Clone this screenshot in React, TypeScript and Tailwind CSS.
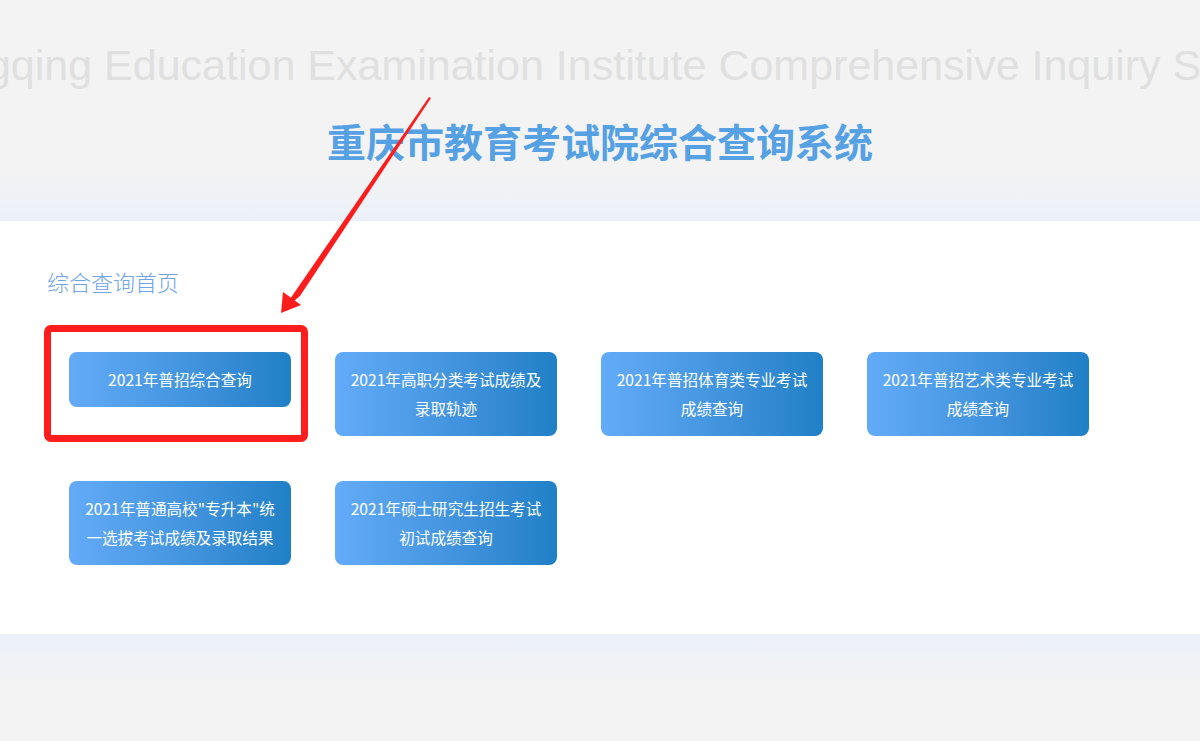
import React from "react";

const queries = [
  "2021年普招综合查询",
  "2021年高职分类考试成绩及录取轨迹",
  "2021年普招体育类专业考试成绩查询",
  "2021年普招艺术类专业考试成绩查询",
  "2021年普通高校\"专升本\"统一选拔考试成绩及录取结果",
  "2021年硕士研究生招生考试初试成绩查询",
];

const cjk = { fontFamily: '"Microsoft YaHei", "Noto Sans CJK SC", sans-serif' };

function Arrow() {
  // hand-drawn red arrow pointing at the first query
  return (
    <svg
      className="pointer-events-none absolute left-0 top-0"
      width="1200"
      height="741"
      viewBox="0 0 1200 741"
    >
      <polygon
        points="429,97 431,98 300,296 294,301 290,299"
        fill="#fd1d1d"
      />
      <polygon points="281,313 283,292 301,305" fill="#fd1d1d" />
    </svg>
  );
}

export default function App() {
  return (
    <div className="relative min-h-[741px] overflow-hidden bg-[#f3f3f3]" style={cjk}>
      {/* english watermark */}
      <div className="flex justify-center overflow-hidden pt-[40px]">
        <span
          className="shrink-0 whitespace-nowrap text-[43px] leading-[50px] text-[#e0e0e0]"
          style={{ fontFamily: '"Liberation Sans", Arial, sans-serif' }}
        >
          Chongqing Education Examination Institute Comprehensive Inquiry System
        </span>
      </div>

      <h1 className="mt-[28px] text-center text-[39px] font-bold leading-[44px] text-[#56a0e4]">
        重庆市教育考试院综合查询系统
      </h1>

      <div className="mt-[9px] h-[50px] bg-gradient-to-b from-[#f3f3f3] to-[#ebf0f9]" />

      <div className="h-[413px] bg-white pl-[47px] pt-[47px]">
        <h2 className="text-[22px] font-light leading-[26px] text-[#6ea3e6]">综合查询首页</h2>

        <div className="ml-[22px] mt-[58px] flex w-[1020px] flex-wrap items-start gap-x-[44px] gap-y-[45px]">
          {queries.map((q) => (
            <button
              key={q}
              type="button"
              className="w-[222px] rounded-[8px] bg-gradient-to-r from-[#63abf9] to-[#1f80c6] px-[14px] py-[13px] text-center text-[15.6px] leading-[29px] text-white"
            >
              {q}
            </button>
          ))}
        </div>
      </div>

      <div className="h-[48px] bg-gradient-to-b from-[#ebf0f9] to-[#f3f3f3]" />

      {/* annotation */}
      <div className="pointer-events-none absolute left-[44px] top-[325px] h-[117px] w-[264px] rounded-[7px] border-[7px] border-[#fd1d1d]" />
      <Arrow />
    </div>
  );
}
